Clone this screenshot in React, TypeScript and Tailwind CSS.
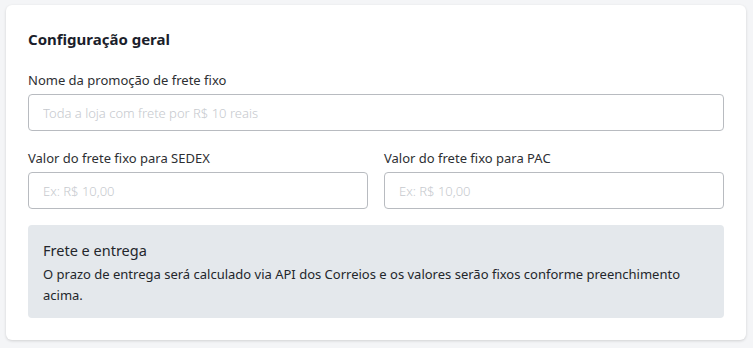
import React from "react";

const Field = ({ label, placeholder }: { label: string; placeholder: string }) => (
  <div className="flex flex-col flex-1">
    <label className="text-[13px] leading-[18px] text-[#2d2f33] mb-[5px]">{label}</label>
    <input
      className="h-[37px] w-full rounded-[4px] border border-[#b8bbc0] bg-white px-[14px] text-[13px] font-light text-[#333] placeholder:text-[#c6c9ce] outline-none"
      placeholder={placeholder}
    />
  </div>
);

export default function App() {
  return (
    <div
      className="min-h-screen w-[753px] h-[348px] bg-[#f4f5f7] pt-[5px] pl-[6px] pr-[7px]"
      style={{ fontFamily: '"Noto Sans", "Open Sans", sans-serif' }}
    >
      <div className="rounded-[6px] bg-white shadow-[0_1px_3px_rgba(0,0,0,0.15)] px-[22px] pt-[24px] pb-[22px]">
        <h2 className="text-[15px] leading-[20px] font-bold text-[#1b1e2b]">Configuração geral</h2>
        <div className="mt-[22px] flex flex-col gap-[18px]">
          <Field label="Nome da promoção de frete fixo" placeholder="Toda a loja com frete por R$ 10 reais" />
          <div className="flex gap-[16px]">
            <Field label="Valor do frete fixo para SEDEX" placeholder="Ex: R$ 10,00" />
            <Field label="Valor do frete fixo para PAC" placeholder="Ex: R$ 10,00" />
          </div>
        </div>
        <div className="mt-[16px] rounded-[4px] bg-[#e4e8ec] px-[15px] pt-[14px] pb-[12px]">
          <h3 className="text-[14.5px] leading-[22px] text-[#23262b]">Frete e entrega</h3>
          <p className="mt-[3px] text-[13px] leading-[21px] text-[#23262b]">
            O prazo de entrega será calculado via API dos Correios e os valores serão fixos conforme preenchimento
            acima.
          </p>
        </div>
      </div>
    </div>
  );
}
